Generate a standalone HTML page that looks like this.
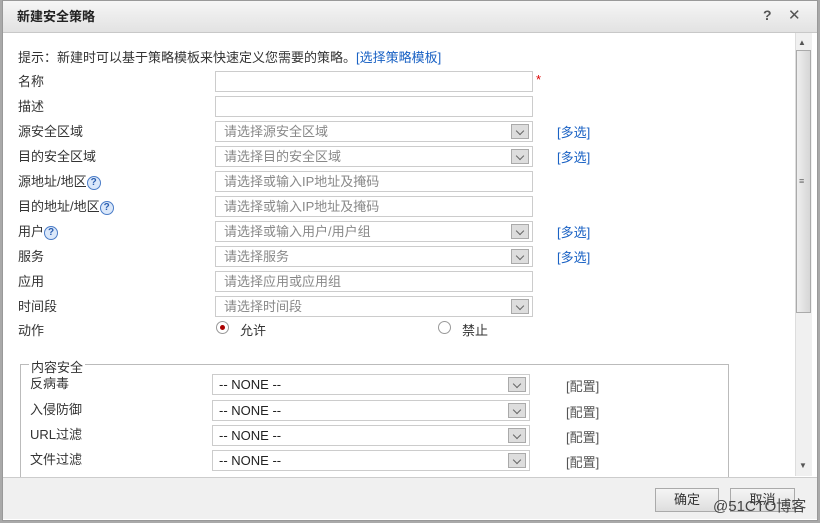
<!DOCTYPE html>
<html><head><meta charset="utf-8"><style>
*{margin:0;padding:0;box-sizing:border-box}
body{width:820px;height:523px;background:#a9a9a9;font-family:"Liberation Sans","Noto Sans CJK SC",sans-serif;font-size:13px;color:#333;position:relative;overflow:hidden}
.dlg{position:absolute;left:2px;top:0;width:816px;height:521px;background:#fff;border:1px solid #999}
.title{position:absolute;left:0;top:0;width:814px;height:32px;background:linear-gradient(#f6f6f6,#e2e2e2);border-bottom:1px solid #c8c8c8;font-weight:bold;font-size:13px;line-height:32px;padding-left:14px;color:#222}
.a{position:absolute;white-space:nowrap}
.inp{position:absolute;left:215px;width:318px;height:21px;border:1px solid #ccc;background:#fff;color:#888;padding-left:8px;line-height:19px}
.sel .arr,.ns .arr{position:absolute;right:3px;top:2px;width:18px;height:15px;background:#ddd;border:1px solid #aaa}
.arr:after{content:"";position:absolute;left:5px;top:3px;width:5px;height:5px;border-right:1.5px solid #666;border-bottom:1.5px solid #666;transform:rotate(45deg)}
.link{color:#1a62c4}
.q{display:inline-block;width:14px;height:14px;border-radius:50%;border:1px solid #4a7cc7;background:#dbe8fa;color:#2a5eb0;font-size:10px;line-height:12px;text-align:center;font-weight:bold;vertical-align:middle}
.ns{position:absolute;left:212px;width:318px;height:21px;border:1px solid #ccc;background:#fff;color:#222;padding-left:6px;line-height:19px;font-size:13px}
.cfg{position:absolute;left:566px;color:#555}
.foot{position:absolute;left:0;top:477px;width:814px;height:42px;background:#f0f0f0;border-top:1px solid #ccc}
.btn{position:absolute;top:488px;height:24px;border:1px solid #aaa;background:linear-gradient(#f5f5f5,#dedede);text-align:center;line-height:22px;color:#333}
</style></head><body>
<div class="dlg">
<div class="title">新建安全策略</div>
<div class="a" style="left:760px;top:6px;font-weight:bold;font-size:14px;color:#555">?</div>
<div class="a" style="left:785px;top:5px;font-size:15px;color:#555">✕</div>
</div>
<div class="a" style="left:795px;top:33px;width:17px;height:443px;background:#f0f0f0;border-left:1px solid #ddd"></div>
<div class="a" style="left:798px;top:38px;font-size:8px;color:#555">▲</div>
<div class="a" style="left:796px;top:50px;width:15px;height:263px;background:linear-gradient(90deg,#eee,#d6d6d6);border:1px solid #aaa"></div>
<div class="a" style="left:799px;top:176px;font-size:9px;color:#666">≡</div>
<div class="a" style="left:799px;top:461px;font-size:8px;color:#555">▼</div>

<div class="a" style="left:18px;top:47px">提示：新建时可以基于策略模板来快速定义您需要的策略。<span class="link">[选择策略模板]</span></div>

<div class="a" style="left:18px;top:71px">名称</div><div class="inp" style="top:71px"></div><div class="a" style="left:536px;top:72px;color:#d00">*</div>
<div class="a" style="left:18px;top:96px">描述</div><div class="inp" style="top:96px"></div>
<div class="a" style="left:18px;top:121px">源安全区域</div><div class="inp sel" style="top:121px">请选择源安全区域<span class="arr"></span></div><div class="a link" style="left:557px;top:122px">[多选]</div>
<div class="a" style="left:18px;top:146px">目的安全区域</div><div class="inp sel" style="top:146px">请选择目的安全区域<span class="arr"></span></div><div class="a link" style="left:557px;top:147px">[多选]</div>
<div class="a" style="left:18px;top:171px">源地址/地区<span class="q">?</span></div><div class="inp" style="top:171px">请选择或输入IP地址及掩码</div>
<div class="a" style="left:18px;top:196px">目的地址/地区<span class="q">?</span></div><div class="inp" style="top:196px">请选择或输入IP地址及掩码</div>
<div class="a" style="left:18px;top:221px">用户<span class="q">?</span></div><div class="inp sel" style="top:221px">请选择或输入用户/用户组<span class="arr"></span></div><div class="a link" style="left:557px;top:222px">[多选]</div>
<div class="a" style="left:18px;top:246px">服务</div><div class="inp sel" style="top:246px">请选择服务<span class="arr"></span></div><div class="a link" style="left:557px;top:247px">[多选]</div>
<div class="a" style="left:18px;top:271px">应用</div><div class="inp" style="top:271px">请选择应用或应用组</div>
<div class="a" style="left:18px;top:296px">时间段</div><div class="inp sel" style="top:296px">请选择时间段<span class="arr"></span></div>
<div class="a" style="left:18px;top:320px">动作</div>
<div class="a" style="left:216px;top:321px;width:13px;height:13px;border-radius:50%;border:1px solid #999;background:#fff"><div style="position:absolute;left:3px;top:3px;width:5px;height:5px;border-radius:50%;background:#a00"></div></div>
<div class="a" style="left:240px;top:320px">允许</div>
<div class="a" style="left:438px;top:321px;width:13px;height:13px;border-radius:50%;border:1px solid #999;background:#fff"></div>
<div class="a" style="left:462px;top:320px">禁止</div>

<div class="a" style="left:20px;top:364px;width:709px;height:120px;border:1px solid #bbb;border-bottom:none"></div>
<div class="a" style="left:29px;top:357px;background:#fff;padding:0 2px">内容安全</div>
<div class="a" style="left:30px;top:373px">反病毒</div><div class="ns" style="top:374px">-- NONE --<span class="arr"></span></div><div class="cfg" style="top:376px">[配置]</div>
<div class="a" style="left:30px;top:399px">入侵防御</div><div class="ns" style="top:400px">-- NONE --<span class="arr"></span></div><div class="cfg" style="top:402px">[配置]</div>
<div class="a" style="left:30px;top:424px">URL过滤</div><div class="ns" style="top:425px">-- NONE --<span class="arr"></span></div><div class="cfg" style="top:427px">[配置]</div>
<div class="a" style="left:30px;top:449px">文件过滤</div><div class="ns" style="top:450px">-- NONE --<span class="arr"></span></div><div class="cfg" style="top:452px">[配置]</div>

<div class="foot" style="left:3px"></div>
<div class="btn" style="left:655px;width:64px">确定</div>
<div class="btn" style="left:730px;width:65px">取消</div>
<div class="a" style="left:713px;top:495px;font-size:15px;color:#444">@51CTO博客</div>
</body></html>
